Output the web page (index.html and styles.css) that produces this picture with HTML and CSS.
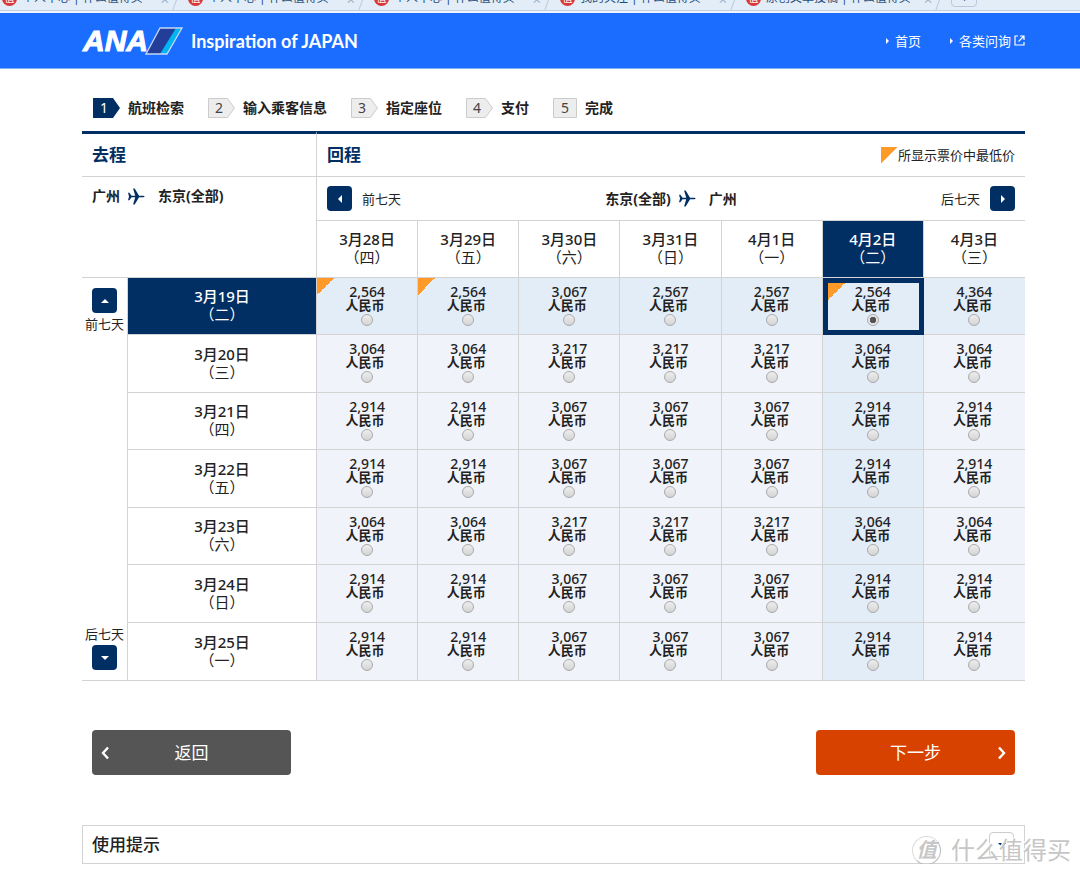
FILE: index.html
```html
<!DOCTYPE html>
<html lang="zh-CN">
<head>
<meta charset="utf-8">
<title>ANA 航班检索</title>
<link rel="stylesheet" href="styles.css">
</head>
<body>
<svg class="defs" aria-hidden="true">
  <symbol id="plane" viewBox="0 0 16 16"><path d="M0 4.500h1.300l2 2.700h3.500L4.800 0.500h1.500L10.400 7.200h3.400c2.400 0 2.400 1.600 0 1.600h-3.400L6.300 15.500H4.800L6.800 8.800H3.300l-2 2.700H0L1 8z"/></symbol>
</svg>
<div class="tabs">
  <div class="tab"><span class="fav">值</span><span class="name">个人中心 | 什么值得买</span><span class="close">×</span></div>
  <div class="tab"><span class="fav">值</span><span class="name">个人中心 | 什么值得买</span><span class="close">×</span></div>
  <div class="tab"><span class="fav">值</span><span class="name">个人中心 | 什么值得买</span><span class="close">×</span></div>
  <div class="tab"><span class="fav">值</span><span class="name">我的关注 | 什么值得买</span><span class="close">×</span></div>
  <div class="tab"><span class="fav">值</span><span class="name">原创文章投稿 | 什么值得买</span><span class="close">×</span></div>
  <div class="newtab">+</div>
</div>
<header class="top">
  <div class="brand">
    <span class="ana">ANA</span>
    <svg class="mark" viewBox="0 0 38 28"><path d="M15 1h22L22 27H1z" fill="#233e99"/><path d="M31 1h6L22 27h-7z" fill="#00b5f1"/><path d="M15 1h22L22 27H1z" fill="none" stroke="#c5d6f5" stroke-width="1.3"/></svg>
    <span class="slogan">Inspiration of JAPAN</span>
  </div>
  <nav class="links">
    <a href="#">首页</a>
    <a href="#">各类问询<svg class="ext" viewBox="0 0 11 11"><path d="M4 1H1v9h9V7M6 1h4v4M10 1L4.500 6.500" fill="none" stroke="currentColor" stroke-width="1.200"/></svg></a>
  </nav>
</header>
<main class="page">
  <ol class="steps">
    <li><svg class="badge on" viewBox="0 0 27 20"><path d="M0 0h20l7 10-7 10H0z"/><text x="11" y="15">1</text></svg>航班检索</li>
    <li><svg class="badge" viewBox="0 0 27 20"><path d="M.5.5h19l7 9.500-7 9.500H.5z"/><text x="11" y="15">2</text></svg>输入乘客信息</li>
    <li><svg class="badge" viewBox="0 0 27 20"><path d="M.5.5h19l7 9.500-7 9.500H.5z"/><text x="11" y="15">3</text></svg>指定座位</li>
    <li><svg class="badge" viewBox="0 0 27 20"><path d="M.5.5h19l7 9.500-7 9.500H.5z"/><text x="11" y="15">4</text></svg>支付</li>
    <li><svg class="badge last" viewBox="0 0 24 20"><path d="M.5.5h23v19H.5z"/><text x="12" y="15">5</text></svg>完成</li>
  </ol>

  <table class="fares">
    <colgroup><col class="c-nav"><col class="c-date"><col><col><col><col><col><col><col></colgroup>
    <thead>
      <tr class="r-title">
        <th colspan="2" class="title split">去程</th>
        <th colspan="7" class="title"><div class="bar"><span>回程</span><span class="legend"><i class="flag"></i>所显示票价中最低价</span></div></th>
      </tr>
      <tr class="r-route">
        <td colspan="2" rowspan="2" class="out"><div class="route"><span>广州</span><svg class="plane"><use href="#plane"/></svg><span>东京(全部)</span></div></td>
        <td colspan="7" class="back"><div class="bar">
          <span class="shift"><button class="sq" aria-label="前七天"><svg viewBox="0 0 10 10"><path d="M7 1v8L3 5z"/></svg></button>前七天</span>
          <span class="route"><span>东京(全部)</span><svg class="plane"><use href="#plane"/></svg><span>广州</span></span>
          <span class="shift">后七天<button class="sq" aria-label="后七天"><svg viewBox="0 0 10 10"><path d="M3 1v8l4-4z"/></svg></button></span>
        </div></td>
      </tr>
      <tr class="r-days">
        <th class="day">3月28日<small>（四）</small></th><th class="day">3月29日<small>（五）</small></th><th class="day">3月30日<small>（六）</small></th><th class="day">3月31日<small>（日）</small></th><th class="day">4月1日<small>（一）</small></th><th class="day sel">4月2日<small>（二）</small></th><th class="day">4月3日<small>（三）</small></th>
      </tr>
    </thead>
    <tbody>
      <tr class="hot">
        <td rowspan="7" class="side"><div class="updown">
          <span class="stack"><button class="sq" aria-label="前七天"><svg viewBox="0 0 10 10"><path d="M1 7h8L5 3z"/></svg></button>前七天</span>
          <span class="stack">后七天<button class="sq" aria-label="后七天"><svg viewBox="0 0 10 10"><path d="M1 3h8L5 7z"/></svg></button></span>
        </div></td>
        <th class="day sel">3月19日<small>（二）</small></th>
        <td class="low"><label>2,564<b>人民币</b><input type="radio" name="f"></label></td>
        <td class="low"><label>2,564<b>人民币</b><input type="radio" name="f"></label></td>
        <td><label>3,067<b>人民币</b><input type="radio" name="f"></label></td>
        <td><label>2,567<b>人民币</b><input type="radio" name="f"></label></td>
        <td><label>2,567<b>人民币</b><input type="radio" name="f"></label></td>
        <td class="low picked"><label>2,564<b>人民币</b><input type="radio" name="f" checked></label></td>
        <td><label>4,364<b>人民币</b><input type="radio" name="f"></label></td>
      </tr>
      <tr>
        <th class="day">3月20日<small>（三）</small></th>
        <td><label>3,064<b>人民币</b><input type="radio" name="f"></label></td>
        <td><label>3,064<b>人民币</b><input type="radio" name="f"></label></td>
        <td><label>3,217<b>人民币</b><input type="radio" name="f"></label></td>
        <td><label>3,217<b>人民币</b><input type="radio" name="f"></label></td>
        <td><label>3,217<b>人民币</b><input type="radio" name="f"></label></td>
        <td class="col"><label>3,064<b>人民币</b><input type="radio" name="f"></label></td>
        <td><label>3,064<b>人民币</b><input type="radio" name="f"></label></td>
      </tr>
      <tr>
        <th class="day">3月21日<small>（四）</small></th>
        <td><label>2,914<b>人民币</b><input type="radio" name="f"></label></td>
        <td><label>2,914<b>人民币</b><input type="radio" name="f"></label></td>
        <td><label>3,067<b>人民币</b><input type="radio" name="f"></label></td>
        <td><label>3,067<b>人民币</b><input type="radio" name="f"></label></td>
        <td><label>3,067<b>人民币</b><input type="radio" name="f"></label></td>
        <td class="col"><label>2,914<b>人民币</b><input type="radio" name="f"></label></td>
        <td><label>2,914<b>人民币</b><input type="radio" name="f"></label></td>
      </tr>
      <tr>
        <th class="day">3月22日<small>（五）</small></th>
        <td><label>2,914<b>人民币</b><input type="radio" name="f"></label></td>
        <td><label>2,914<b>人民币</b><input type="radio" name="f"></label></td>
        <td><label>3,067<b>人民币</b><input type="radio" name="f"></label></td>
        <td><label>3,067<b>人民币</b><input type="radio" name="f"></label></td>
        <td><label>3,067<b>人民币</b><input type="radio" name="f"></label></td>
        <td class="col"><label>2,914<b>人民币</b><input type="radio" name="f"></label></td>
        <td><label>2,914<b>人民币</b><input type="radio" name="f"></label></td>
      </tr>
      <tr>
        <th class="day">3月23日<small>（六）</small></th>
        <td><label>3,064<b>人民币</b><input type="radio" name="f"></label></td>
        <td><label>3,064<b>人民币</b><input type="radio" name="f"></label></td>
        <td><label>3,217<b>人民币</b><input type="radio" name="f"></label></td>
        <td><label>3,217<b>人民币</b><input type="radio" name="f"></label></td>
        <td><label>3,217<b>人民币</b><input type="radio" name="f"></label></td>
        <td class="col"><label>3,064<b>人民币</b><input type="radio" name="f"></label></td>
        <td><label>3,064<b>人民币</b><input type="radio" name="f"></label></td>
      </tr>
      <tr>
        <th class="day">3月24日<small>（日）</small></th>
        <td><label>2,914<b>人民币</b><input type="radio" name="f"></label></td>
        <td><label>2,914<b>人民币</b><input type="radio" name="f"></label></td>
        <td><label>3,067<b>人民币</b><input type="radio" name="f"></label></td>
        <td><label>3,067<b>人民币</b><input type="radio" name="f"></label></td>
        <td><label>3,067<b>人民币</b><input type="radio" name="f"></label></td>
        <td class="col"><label>2,914<b>人民币</b><input type="radio" name="f"></label></td>
        <td><label>2,914<b>人民币</b><input type="radio" name="f"></label></td>
      </tr>
      <tr>
        <th class="day">3月25日<small>（一）</small></th>
        <td><label>2,914<b>人民币</b><input type="radio" name="f"></label></td>
        <td><label>2,914<b>人民币</b><input type="radio" name="f"></label></td>
        <td><label>3,067<b>人民币</b><input type="radio" name="f"></label></td>
        <td><label>3,067<b>人民币</b><input type="radio" name="f"></label></td>
        <td><label>3,067<b>人民币</b><input type="radio" name="f"></label></td>
        <td class="col"><label>2,914<b>人民币</b><input type="radio" name="f"></label></td>
        <td><label>2,914<b>人民币</b><input type="radio" name="f"></label></td>
      </tr>
    </tbody>
  </table>

  <div class="actions">
    <button class="btn prev"><svg viewBox="0 0 8 14"><path d="M7 1.500L2 7l5 5.500"/></svg><span>返回</span></button>
    <button class="btn next"><span>下一步</span><svg viewBox="0 0 8 14"><path d="M1 1.500L6 7l-5 5.500"/></svg></button>
  </div>

  <section class="tips">
    <h2>使用提示</h2>
    <button class="toggle" aria-label="展开"><svg viewBox="0 0 10 10"><path d="M1 3h8L5 7z"/></svg></button>
  </section>
</main>
<div class="stamp"><span class="seal">值</span><span>什么值得买</span></div>
</body>
</html>
```
FILE: styles.css
```css
* { box-sizing: border-box; }
body {
  margin: 0;
  position: relative;
  background: #fff;
  color: #222;
  font-family: "Noto Sans", "Noto Sans CJK SC", sans-serif;
  font-size: 13px;
  line-height: 18px;
}
button { font: inherit; border: 0; padding: 0; cursor: pointer; }
.defs { display: none; }

.tabs {
  display: flex;
  align-items: flex-end;
  height: 13px;
  padding-bottom: 3px;
  overflow: hidden;
  background: linear-gradient(#e3edf7 10px, #c3d0e0 10px, #c3d0e0 11px, #f1f5f9 11px);
  font-size: 12px;
  color: #1d4f7c;
}
.tab {
  display: flex;
  align-items: center;
  flex: 0 0 186px;
  height: 20px;
  padding: 0 0 0 2px;
  gap: 5px;
}
.tab::after {
  content: "";
  align-self: stretch;
  width: 1px;
  margin-right: 9px;
  background: #b9c8dc;
  transform: skewX(-20deg);
}
.fav {
  flex: none;
  width: 15px;
  height: 15px;
  margin-bottom: 4px;
  border-radius: 50%;
  background: #d8383b;
  color: #fff;
  font-size: 10px;
  line-height: 15px;
  text-align: center;
}
.name { flex: 1; overflow: hidden; margin-bottom: 4px; white-space: nowrap; }
.close { margin: 0 2px 2px 8px; color: #9db4cd; font-size: 15px; }
.newtab {
  width: 26px;
  height: 22px;
  margin: 0 0 3px 2px;
  border: 1px solid #b9c8dc;
  border-radius: 4px;
  line-height: 24px;
  text-align: center;
}

.top {
  display: flex;
  justify-content: space-between;
  align-items: center;
  height: 56px;
  padding: 0 55px 0 83px;
  background: #1a6dff;
  border-bottom: 1px solid #7fadf7;
  color: #fff;
}
.brand { display: flex; align-items: center; }
.ana {
  font: italic bold 30px/30px "Liberation Sans", sans-serif;
  -webkit-text-stroke: 1px #fff;
}
.mark { width: 38px; height: 28px; margin-left: -3px; }
.slogan { margin-left: 8px; font: bold 18px/24px Lato, sans-serif; }
.links { display: flex; gap: 29px; }
.links a { display: flex; align-items: center; color: #fff; text-decoration: none; }
.links a::before {
  content: "";
  margin-right: 6px;
  border-left: 3px solid #fff;
  border-top: 3px solid transparent;
  border-bottom: 3px solid transparent;
}
.ext { width: 11px; height: 11px; margin-left: 3px; }

.page { padding: 29px 55px 0 82px; }
.steps {
  display: flex;
  gap: 24px;
  height: 33px;
  margin: 0;
  padding: 0 11px;
  list-style: none;
  font-size: 14px;
  line-height: 20px;
  font-weight: bold;
}
.steps li { display: flex; gap: 8px; }
.badge { width: 27px; height: 20px; fill: #ededed; stroke: #ccc; }
.badge.last { width: 24px; }
.badge text { font-size: 14px; font-weight: normal; fill: #444; stroke: none; text-anchor: middle; }
.badge.on { fill: #012e63; stroke: none; }
.badge.on text { fill: #fff; }

.fares { width: 100%; table-layout: fixed; border-collapse: separate; border-spacing: 0; }
.c-nav { width: 46px; }
.c-date { width: 189px; }
.fares th, .fares td { padding: 0; border: 0 solid #d3d3d3; border-width: 0 1px 1px 0; }
.fares tr > :last-child { border-right: 0; }
.fares .r-title th {
  height: 46px;
  padding: 0 10px;
  border-top: 3px solid #012e63;
  color: #012e63;
  font-size: 17px;
  text-align: left;
}
.bar { display: flex; justify-content: space-between; align-items: center; }
.legend { display: flex; align-items: center; color: #222; font-size: 13px; font-weight: normal; }
.flag { width: 17px; height: 17px; background: #ff9a29; clip-path: polygon(0 0, 100% 0, 0 100%); }
.fares .r-route .back { height: 44px; padding: 0 10px; }
.fares .out { padding: 10px; vertical-align: top; }
.shift { display: flex; align-items: center; gap: 10px; }
.route { display: flex; align-items: center; font-size: 14px; font-weight: bold; }
.plane { width: 17px; height: 17px; margin: 0 13px 0 8px; fill: #012e63; }
.sq {
  display: grid;
  place-items: center;
  width: 25px;
  height: 25px;
  border-radius: 4px;
  background: #012e63;
}
.sq svg { width: 10px; height: 10px; fill: #fff; }
.r-days th { height: 57px; }
.fares .day { padding-bottom: 2px; font-size: 15px; font-weight: 500; text-align: center; }
.day small { display: block; font-size: 15px; font-weight: normal; }
.fares .sel { background: #012e63; color: #fff; }
.fares .side { height: 100%; vertical-align: top; }
.updown {
  display: flex;
  flex-direction: column;
  justify-content: space-between;
  height: 402px;
  padding: 10px 0;
}
.stack { display: flex; flex-direction: column; align-items: center; gap: 2px; white-space: nowrap; }

.fares tbody tr { height: 58px; }
.fares tbody tr:nth-child(odd):not(:last-child) { height: 57px; }
.fares tbody td:not(.side) { padding-bottom: 2px; background: #f0f3f9; text-align: center; }
.fares tbody .hot td:not(.side), .fares tbody td.col { background: #e3edf8; }
.fares tbody td.low:not(.side) {
  background: linear-gradient(135deg, #ff9a29 50%, transparent 50%) 0 0 / 17px 17px no-repeat #e3edf8;
}
.fares tbody td.picked:not(.side) {
  background-position: 5px 5px;
  box-shadow: inset 5px 0 #012e63, inset -4px 0 #012e63, inset 0 5px #012e63, inset 0 -4px #012e63;
  border-color: #012e63;
}
.fares label {
  display: flex;
  flex-direction: column;
  align-items: center;
  font-size: 14px;
  font-weight: 500;
  line-height: 14px;
}
.fares label b { padding-right: 4px; font-size: 13px; line-height: 13px; }
.fares input {
  appearance: none;
  width: 12px;
  height: 12px;
  margin: 2px 0 0;
  border: 1px solid #aaa;
  border-radius: 50%;
  background: linear-gradient(#eee, #d4d4d4);
}
.fares input:checked { background: radial-gradient(circle, #555 3px, #e4e4e4 3px); }

.actions { display: flex; justify-content: space-between; margin: 49px 10px 50px; }
.btn {
  display: flex;
  align-items: center;
  width: 199px;
  height: 45px;
  padding: 0 9px;
  border-radius: 4px;
  background: #555;
  color: #fff;
  font-size: 17px;
}
.btn span { flex: 1; text-align: center; }
.btn svg { width: 8px; height: 14px; fill: none; stroke: #fff; stroke-width: 2.4; }
.prev span { margin-right: 8px; }
.next span { margin-left: 8px; }
.next { background: #d84200; }

.tips {
  display: flex;
  align-items: center;
  justify-content: space-between;
  height: 39px;
  padding: 0 10px 0 9px;
  border: 1px solid #d3d3d3;
}
.tips h2 { margin: 0; font-size: 17px; font-weight: 500; }
.toggle {
  display: grid;
  place-items: center;
  width: 25px;
  height: 25px;
  border: 1px solid #ccc;
  border-radius: 4px;
  background: #fff;
}
.toggle svg { width: 10px; height: 10px; fill: #012e63; }

.stamp {
  position: absolute;
  right: 9px;
  bottom: -2px;
  display: flex;
  align-items: center;
  gap: 10px;
  color: #c6c6c6;
  font-size: 24px;
  line-height: 32px;
  text-shadow: -1px -1px #fff;
}
.seal {
  width: 29px;
  height: 29px;
  border: 1px solid #ddd;
  border-right-color: #bbb;
  border-bottom-color: #bbb;
  border-radius: 50%;
  font-size: 20px;
  font-style: italic;
  font-weight: bold;
  line-height: 26px;
  text-align: center;
}
```
